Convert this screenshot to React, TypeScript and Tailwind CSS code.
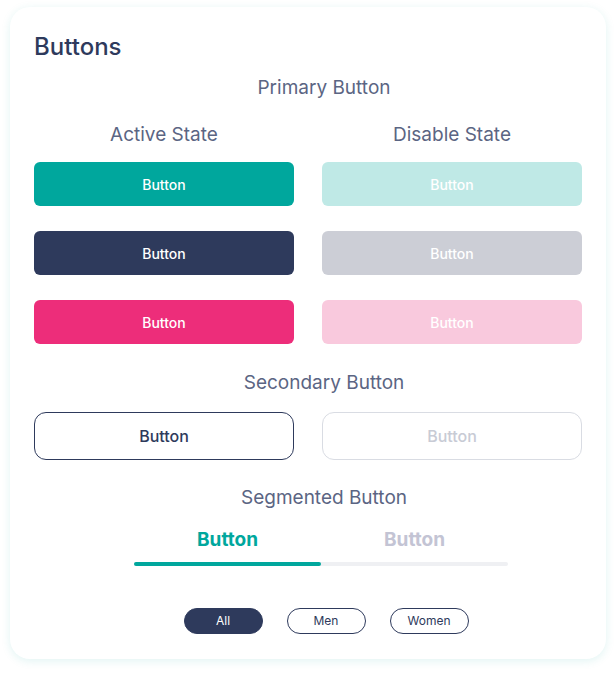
import { Fragment } from 'react'

const font = { fontFamily: 'Inter, "Noto Sans", sans-serif' }

const primaryRows = [
  { active: 'bg-[#00a79d]', disabled: 'bg-[#bfe9e6]' },
  { active: 'bg-[#2e3a5c]', disabled: 'bg-[#ccced6]' },
  { active: 'bg-[#ed2d7a]', disabled: 'bg-[#f9c9dd]' },
]

const pills = ['All', 'Men', 'Women']

export default function App() {
  return (
    <div className="min-h-screen bg-white px-[10px] pt-[7px] pb-[14px]" style={font}>
      <div className="w-[596px] rounded-[20px] bg-white px-6 pt-[25px] pb-[25px] shadow-[0_2px_10px_rgba(0,167,157,0.12)]">
        <h1 className="text-[24px] leading-[30px] font-medium text-[#2e3a5c]">Buttons</h1>

        {/* Primary */}
        <h2 className="mt-[13px] pl-8 text-center text-[19px] leading-[26px] text-[#5b6583]">Primary Button</h2>
        <div className="mt-[21px] grid grid-cols-2 gap-x-7">
          <div className="text-center text-[19px] leading-[26px] text-[#5b6583]">Active State</div>
          <div className="text-center text-[19px] leading-[26px] text-[#5b6583]">Disable State</div>
        </div>
        <div className="mt-[14px] grid grid-cols-2 gap-x-7 gap-y-[25px]">
          {primaryRows.map((r, i) => (
            <Fragment key={i}>
              <button className={`h-[44px] rounded-md ${r.active} text-[14px] font-medium text-white`}>
                Button
              </button>
              <button className={`h-[44px] rounded-md ${r.disabled} text-[14px] font-medium text-white`}>
                Button
              </button>
            </Fragment>
          ))}
        </div>

        {/* Secondary */}
        <h2 className="mt-[26px] pl-8 text-center text-[19px] leading-[26px] text-[#5b6583]">Secondary Button</h2>
        <div className="mt-4 grid grid-cols-2 gap-x-7">
          <button className="h-[48px] rounded-xl border border-[#2e3a5c] text-[16px] font-medium text-[#2e3a5c]">
            Button
          </button>
          <button className="h-[48px] rounded-xl border border-[#d9dce3] text-[16px] font-medium text-[#c8cbd5]">
            Button
          </button>
        </div>

        {/* Segmented */}
        <h2 className="mt-[25px] pl-8 text-center text-[19px] leading-[26px] text-[#5b6583]">Segmented Button</h2>
        <div className="mt-4 flex justify-center pl-[26px]">
          <div className="w-[374px]">
            <div className="grid grid-cols-2">
              <div className="text-center text-[19px] leading-[26px] font-bold text-[#00a79d]">Button</div>
              <div className="text-center text-[19px] leading-[26px] font-bold text-[#c3c4d4]">Button</div>
            </div>
            <div className="mt-[9px] flex h-[4px] rounded-full bg-[#eff0f3]">
              <div className="h-full w-1/2 rounded-full bg-[#00a79d]" />
            </div>
          </div>
        </div>

        {/* Pills */}
        <div className="mt-[42px] flex justify-center gap-6 pl-9">
          {pills.map((p, i) => (
            <button
              key={p}
              className={`h-[26px] w-[79px] rounded-full border border-[#2e3a5c] text-[12px] ${
                i === 0 ? 'bg-[#2e3a5c] text-white' : 'bg-white text-[#2e3a5c]'
              }`}
            >
              {p}
            </button>
          ))}
        </div>
      </div>
    </div>
  )
}
